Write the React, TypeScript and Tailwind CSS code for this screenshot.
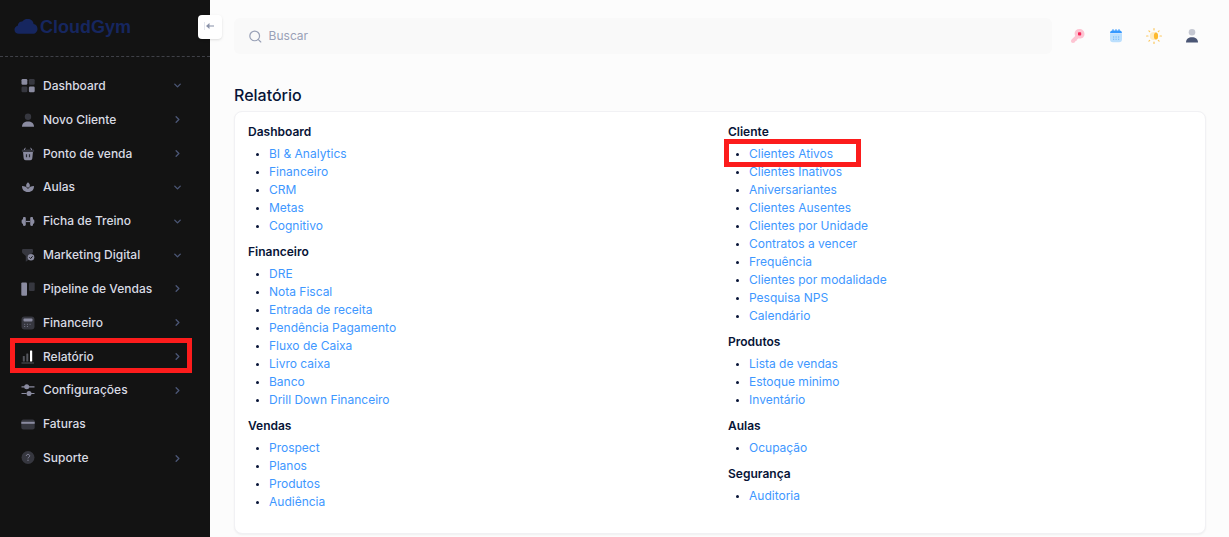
import React from 'react';
import { ChevronDown, ChevronRight, Search } from 'lucide-react';

type MenuItem = {
  label: string;
  icon: React.ReactNode;
  arrow?: 'down' | 'right';
  highlighted?: boolean;
};

type ReportGroup = {
  title: string;
  links: string[];
};

const light = '#8a8ba0';
const dark = '#36373f';

const menu: MenuItem[] = [
  {
    label: 'Dashboard',
    arrow: 'down',
    icon: (
      <>
        <rect x="0.5" y="0" width="5.8" height="5.8" rx="1.2" fill={light} />
        <rect x="7.9" y="0" width="5.8" height="5.8" rx="1.2" fill={dark} />
        <rect x="0.5" y="7.5" width="5.8" height="5.8" rx="1.2" fill={dark} />
        <rect x="7.9" y="7.5" width="5.8" height="5.8" rx="1.2" fill={light} />
      </>
    ),
  },
  {
    label: 'Novo Cliente',
    arrow: 'right',
    icon: (
      <>
        <circle cx="7" cy="3.8" r="3.2" fill={dark} />
        <path d="M1 13.8C1 10.3 3.6 8.5 7 8.5S13 10.3 13 13.8Z" fill={light} />
      </>
    ),
  },
  {
    label: 'Ponto de venda',
    arrow: 'right',
    icon: (
      <>
        <path d="M2 4.600h10l-.7 6.900a2 2 0 0 1-2 1.800H4.700a2 2 0 0 1-2-1.800Z" fill={light} />
        <rect x="0.800" y="2.600" width="12.400" height="2.400" rx="1" fill={dark} />
        <path d="M4.300.8 3.300 3M9.700.8l1 2.200" stroke={light} />
        <path d="M5.500 7.200v3M8.500 7.200v3" stroke="#2b2c33" strokeWidth="1.200" />
      </>
    ),
  },
  {
    label: 'Aulas',
    arrow: 'down',
    icon: (
      <>
        <path d="M7 2.200c1.500 1.400 2.200 2.700 1.700 4.100L7 8 5.300 6.300C4.800 4.900 5.500 3.600 7 2.200Z" fill={light} />
        <path d="M1 6c2.800 0 4.900 1 6 3 1.100-2 3.200-3 6-3 0 3.800-2 6-6 6s-6-2.200-6-6Z" fill={light} />
      </>
    ),
  },
  {
    label: 'Ficha de Treino',
    arrow: 'down',
    icon: (
      <>
        <path d="M5 7.500h4" stroke={light} strokeWidth="1.200" />
        <path d="M2 3.500c1.700-.8 2.800-.4 2.800 1v6c0 1.400-1.100 1.800-2.800 1ZM12 3.500c-1.700-.8-2.800-.4-2.800 1v6c0 1.400 1.100 1.800 2.800 1Z" fill={light} />
        <path d="M2 5.200v4.600C1 9.800.6 9 .6 7.500S1 5.200 2 5.200ZM12 5.200v4.600c1 0 1.400-.8 1.400-2.300S13 5.200 12 5.200Z" fill={light} />
      </>
    ),
  },
  {
    label: 'Marketing Digital',
    arrow: 'down',
    icon: (
      <>
        <path d="M1 2.200C1 1.300 1.600 1 2.400 1h8.200c.8 0 1.400.3 1.400 1.200v1.500c0 .7-.4 1.200-1 1.700L8 8v3.500l-3.200 2.300V8L1.900 5.400C1.300 4.900 1 4.400 1 3.700Z" fill={dark} />
        <circle cx="10" cy="9.300" r="3.300" fill={light} />
        <path d="m8.400 9.300 1.200 1.200 2-2.200" fill="none" stroke="#131313" />
      </>
    ),
  },
  {
    label: 'Pipeline de Vendas',
    arrow: 'right',
    icon: (
      <>
        <rect x="0.300" y="0.500" width="5.700" height="13.300" rx="1" fill={light} />
        <rect x="8" y="0.500" width="5.700" height="8.500" rx="1" fill={dark} />
      </>
    ),
  },
  {
    label: 'Financeiro',
    arrow: 'right',
    icon: (
      <>
        <rect x="0.500" y="0.500" width="13" height="13" rx="3" fill={dark} />
        <rect x="2.500" y="2.500" width="9" height="3" rx="1" fill={light} />
        <path d="M3.200 8.300h1M5.900 8.300h1M8.600 8.300h1M3.200 10.500h1M5.900 10.500h1" stroke={light} strokeWidth="0.800" />
      </>
    ),
  },
  {
    label: 'Relatório',
    arrow: 'right',
    highlighted: true,
    icon: (
      <>
        <rect x="1.800" y="6" width="2" height="5.500" rx="0.500" fill="#55565d" />
        <rect x="5.300" y="3.500" width="2" height="8" rx="0.500" fill="#55565d" />
        <rect x="9" y="0.500" width="2.200" height="11" rx="0.500" fill="#ffffff" />
        <path d="M0.500 13h12.500" stroke="#55565d" />
      </>
    ),
  },
  {
    label: 'Configurações',
    arrow: 'right',
    icon: (
      <>
        <path d="M0.500 3.800h3.500M8 3.800h5.500M0.500 10.500h5M10 10.500h3.500" stroke={light} strokeWidth="1.200" />
        <circle cx="5.700" cy="3.800" r="2.500" fill={light} />
        <circle cx="8" cy="10.500" r="2.500" fill={light} />
      </>
    ),
  },
  {
    label: 'Faturas',
    icon: (
      <>
        <rect x="0.300" y="2.500" width="13.400" height="10" rx="2" fill={dark} />
        <rect x="0.300" y="4.800" width="13.400" height="2" fill={light} />
      </>
    ),
  },
  {
    label: 'Suporte',
    arrow: 'right',
    icon: (
      <>
        <circle cx="7" cy="6.500" r="6.500" fill={dark} />
        <path d="M5.300 5c.1-1.100.8-1.600 1.700-1.600s1.700.6 1.700 1.500c0 1.300-1.700 1.300-1.700 2.500M7 8.700v1.200" fill="none" stroke={light} />
      </>
    ),
  },
];

const leftGroups: ReportGroup[] = [
  { title: 'Dashboard', links: ['BI & Analytics', 'Financeiro', 'CRM', 'Metas', 'Cognitivo'] },
  {
    title: 'Financeiro',
    links: [
      'DRE',
      'Nota Fiscal',
      'Entrada de receita',
      'Pendência Pagamento',
      'Fluxo de Caixa',
      'Livro caixa',
      'Banco',
      'Drill Down Financeiro',
    ],
  },
  { title: 'Vendas', links: ['Prospect', 'Planos', 'Produtos', 'Audiência'] },
];

const rightGroups: ReportGroup[] = [
  {
    title: 'Cliente',
    links: [
      'Clientes Ativos',
      'Clientes Inativos',
      'Aniversariantes',
      'Clientes Ausentes',
      'Clientes por Unidade',
      'Contratos a vencer',
      'Frequência',
      'Clientes por modalidade',
      'Pesquisa NPS',
      'Calendário',
    ],
  },
  { title: 'Produtos', links: ['Lista de vendas', 'Estoque minimo', 'Inventário'] },
  { title: 'Aulas', links: ['Ocupação'] },
  { title: 'Segurança', links: ['Auditoria'] },
];

const Sidebar: React.FC = () => (
  <aside className="relative w-[210px] shrink-0 bg-[#131313]">
    <div className="flex h-[57px] items-center border-b border-dashed border-[#3f4047] px-3.5 pb-0.5">
      <a href="#" className="flex items-center gap-0.5 text-[#16265f]">
        <svg width="24" height="16" viewBox="0 0 24 16" fill="currentColor" aria-hidden="true">
          <path d="M5 14.800C2.300 14.800.5 13.100.5 10.700c0-2 1.300-3.600 3.200-4C4 4.100 6 2.500 8.300 2.600 9.500.8 11.500-.2 13.600-.2c3.300 0 5.700 2.200 6 5.300 2.300.3 3.900 2.200 3.900 4.700 0 2.900-1.900 5-4.700 5Z" />
        </svg>
        <span className="font-['Liberation_Sans',sans-serif] text-lg font-bold">CloudGym</span>
      </a>
    </div>
    <button
      type="button"
      aria-label="Recolher menu"
      className="absolute -right-3 top-[15px] flex size-6 items-center justify-center rounded bg-white shadow-sm"
    >
      <svg width="14" height="14" viewBox="0 0 14 14" fill="none" aria-hidden="true">
        <path d="M1.500 2v8" stroke="#e4e7ee" />
        <path d="M5 6h6" stroke="#9aa2b6" strokeWidth="1.200" />
        <path d="M6.500 3 3 6l3.500 3Z" fill="#8b93a9" />
      </svg>
    </button>

    <nav className="mt-3 grid h-[406px] auto-rows-fr">
      {menu.map((item) => (
        <a
          key={item.label}
          href="#"
          className="relative flex items-center gap-2 pl-[21px] pr-[27px] text-xs font-medium text-[#d9dbe4]"
        >
          <svg width="14" height="14" viewBox="0 0 14 14" aria-hidden="true">{item.icon}</svg>
          <span className="flex-1">{item.label}</span>
          {item.arrow === 'down' && <ChevronDown size={11} strokeWidth={3} className="text-[#4b5675]" />}
          {item.arrow === 'right' && <ChevronRight size={11} strokeWidth={3} className="text-[#4b5675]" />}
          {item.highlighted && (
            <span className="absolute -top-0.5 bottom-0 left-2.5 right-[18px] border-5 border-[#fc1c1c]" />
          )}
        </a>
      ))}
    </nav>
  </aside>
);

const Header: React.FC = () => (
  <header className="flex items-center gap-3">
    <label className="flex h-9 flex-1 items-center gap-1.5 rounded-md bg-[#f9f9f9] px-3.5">
      <Search size={15} strokeWidth={2} className="text-[#99a1b7]" />
      <input
        type="text"
        placeholder="Buscar"
        aria-label="Buscar"
        className="w-full bg-transparent text-xs outline-none placeholder:text-[#99a1b7]"
      />
    </label>
    <div className="flex gap-2.5">
      <button type="button" aria-label="Chave" className="flex size-7 items-center justify-center">
        <svg width="16" height="16" viewBox="0 0 16 16" aria-hidden="true">
          <path d="M4.600 5.600C4.600 2.900 6.600 1 9.400 1c2.900 0 5.100 2.100 5.100 4.900s-2.200 4.700-4.900 4.700H8.200L6.600 12v1.100H5.500C5.200 14.300 4.200 15 3 15c-1.200 0-2-.9-2-2 0-.6.200-1.100.6-1.500l3.600-3.600c-.4-.7-.6-1.500-.6-2.300Z" fill="#fdc4d2" />
          <rect x="8" y="4.300" width="3.200" height="3.200" rx="0.800" fill="#f8285a" />
        </svg>
      </button>
      <button type="button" aria-label="Agenda" className="flex size-7 items-center justify-center">
        <svg width="16" height="16" viewBox="0 0 16 16" aria-hidden="true">
          <path d="M2 6h12v5.200a3 3 0 0 1-3 3H5a3 3 0 0 1-3-3Z" fill="#bbdffd" />
          <path d="M2 5.300C2 3.600 2.900 2.500 4.400 2.500h7.200c1.500 0 2.400 1.100 2.400 2.800Z" fill="#3699ff" />
          <path d="M5 1.300v2M8 1.300v2M11 1.300v2" stroke="#3699ff" strokeWidth="1.200" />
          <path d="M5 9h1.200M7.500 9h1.200M10 9h1.200M5 11.300h1.200M7.500 11.300h1.200M10 11.300h1.200" stroke="#6db4f7" strokeWidth="1.100" />
        </svg>
      </button>
      <button type="button" aria-label="Tema" className="flex size-7 items-center justify-center">
        <svg width="16" height="16" viewBox="0 0 16 16" aria-hidden="true">
          <circle cx="7.800" cy="8" r="4" fill="#ffecc4" />
          <ellipse cx="10" cy="8" rx="2.100" ry="3.500" fill="#fdb92e" />
          <path
            d="M8 .6v1.400M8 14v1.400M.6 8h1.400M14 8h1.400M2.900 2.900l.8.800M12.300 12.300l.8.800M2.900 13.100l.8-.8M12.300 3.700l.8-.8"
            stroke="#fbc860"
            strokeWidth="1.200"
            strokeLinecap="round"
          />
        </svg>
      </button>
      <button type="button" aria-label="Perfil" className="flex size-7 items-center justify-center">
        <svg width="16" height="16" viewBox="0 0 16 16" aria-hidden="true">
          <circle cx="8" cy="4.300" r="3.300" fill="#c5c8d2" />
          <path d="M2 14.500C2 11 4.600 9.200 8 9.200s6 1.800 6 5.300Z" fill="#4b5675" />
        </svg>
      </button>
    </div>
  </header>
);

const ReportColumn: React.FC<{ groups: ReportGroup[] }> = ({ groups }) => (
  <div>
    {groups.map((group) => (
      <section key={group.title} className="mb-2">
        <h2 className="mb-1 font-semibold">{group.title}</h2>
        <ul className="list-disc pl-[21px] marker:text-[9px]">
          {group.links.map((link) => (
            <li key={link} className="relative">
              <a href="#" className="text-[#3e97ff]">{link}</a>
              {link === 'Clientes Ativos' && (
                <span className="absolute -top-1.5 -bottom-1 -left-[25px] z-10 w-[137px] border-5 border-[#fc1c1c]" />
              )}
            </li>
          ))}
        </ul>
      </section>
    ))}
  </div>
);

const App: React.FC = () => {
  return (
    <div className="flex min-h-screen bg-[#fcfcfc] font-[Inter,sans-serif] text-[#071437]">
      <Sidebar />
      <main className="min-w-0 flex-1 pt-[18px] pr-[23px] pb-[3px] pl-6">
        <Header />
        <h1 className="mt-[29px] mb-1 text-base font-medium">Relatório</h1>
        <div className="grid grid-cols-2 gap-4 rounded-lg border border-[#f1f1f4] bg-white px-[13px] pt-[11px] pb-3.5 text-xs leading-[18px] shadow-xs">
          <ReportColumn groups={leftGroups} />
          <ReportColumn groups={rightGroups} />
        </div>
      </main>
    </div>
  );
};

export default App;
